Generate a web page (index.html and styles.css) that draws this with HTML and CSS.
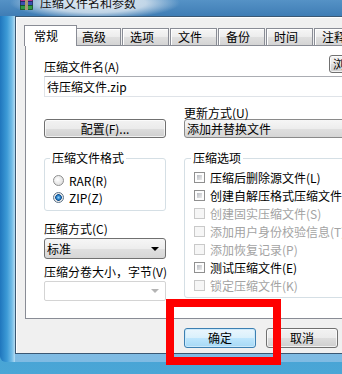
FILE: index.html
```html
<!DOCTYPE html>
<html lang="zh-CN">
<head>
    <meta charset="UTF-8">
    <title>压缩文件名和参数</title>
    <link rel="stylesheet" href="styles.css">
</head>
<body>
    <div class="window">
        <div class="titlebar">
            <svg class="app-icon" viewBox="0 0 13 13" width="13" height="13">
                <rect x="0.5" y="0.5" width="12" height="4" fill="#b6388d" stroke="#5a1a48" stroke-width="0.8"/>
                <rect x="0.5" y="4.5" width="12" height="4" fill="#3b4fb2" stroke="#1b2660" stroke-width="0.8"/>
                <rect x="0.5" y="8.5" width="12" height="4" fill="#2f9a45" stroke="#14501f" stroke-width="0.8"/>
                <rect x="5" y="0" width="3" height="13" fill="#a89a74"/>
            </svg>
            <span class="title">压缩文件名和参数</span>
        </div>

        <div class="client">
            <div class="tabs">
                <div class="tab active">常规</div>
                <div class="tab">高级</div>
                <div class="tab">选项</div>
                <div class="tab">文件</div>
                <div class="tab">备份</div>
                <div class="tab">时间</div>
                <div class="tab">注释</div>
            </div>

            <div class="panel">
                <div class="row-top">
                    <span class="label">压缩文件名(A)</span>
                    <button class="btn browse">浏览(B)...</button>
                </div>
                <div class="textbox">待压缩文件.zip</div>

                <div class="cols cols-mid">
                    <button class="btn config">配置(F)...</button>
                    <div class="field">
                        <div class="label small">更新方式(U)</div>
                        <div class="dropdown">添加并替换文件<span class="arrow"></span></div>
                    </div>
                </div>

                <div class="cols cols-groups">
                    <div class="left-col">
                        <fieldset class="group format">
                            <legend>压缩文件格式</legend>
                            <div class="option"><span class="radio"></span>RAR(R)</div>
                            <div class="option"><span class="radio checked"></span>ZIP(Z)</div>
                        </fieldset>
                        <div class="label method">压缩方式(C)</div>
                        <div class="dropdown tall">标准<span class="arrow"></span></div>
                        <div class="label volume">压缩分卷大小，字节(V)</div>
                        <div class="combo"><span class="arrow"></span></div>
                    </div>

                    <fieldset class="group options">
                        <legend>压缩选项</legend>
                        <div class="check-row"><span class="check"></span>压缩后删除源文件(L)</div>
                        <div class="check-row"><span class="check"></span>创建自解压格式压缩文件(X)</div>
                        <div class="check-row disabled"><span class="check"></span>创建固实压缩文件(S)</div>
                        <div class="check-row disabled"><span class="check"></span>添加用户身份校验信息(T)</div>
                        <div class="check-row disabled"><span class="check"></span>添加恢复记录(P)</div>
                        <div class="check-row"><span class="check"></span>测试压缩文件(E)</div>
                        <div class="check-row disabled"><span class="check"></span>锁定压缩文件(K)</div>
                    </fieldset>
                </div>
            </div>

            <div class="buttons">
                <button class="btn default">确定</button>
                <button class="btn">取消</button>
                <button class="btn">帮助</button>
            </div>
        </div>
    </div>

    <div class="highlight"></div>
</body>
</html>
```

FILE: styles.css
```css
body {
    margin: 0;
    width: 342px;
    height: 374px;
    overflow: hidden;
    position: relative;
    background: linear-gradient(#2c86c2, #4aa6d6);
    font-family: "Noto Sans CJK SC", sans-serif;
    font-size: 12px;
    color: #000;
}

/* window frame */
.window {
    width: 440px;
    height: 362px;
    box-sizing: border-box;
    padding: 0 0 8px 15px;
    display: flex;
    flex-direction: column;
    border-bottom-left-radius: 6px;
    background:
        linear-gradient(90deg, #1f76bd 0, #3c9ad6 7px, #74bde7 12px, #b6dcf2 15px) left top / 15px 100% no-repeat,
        linear-gradient(#9ccdec, #7fbbe3);
}
.titlebar {
    height: 16px;
    margin-left: -15px;
    padding-left: 20px;
    display: flex;
    align-items: flex-start;
    gap: 7px;
    overflow: hidden;
    background:
        radial-gradient(ellipse 85px 16px at 95px 3px, rgba(232, 239, 245, 0.97), rgba(222, 232, 241, 0.8) 60%, rgba(222, 232, 241, 0) 100%),
        linear-gradient(#5592c6, #3f7db5);
}
.app-icon {
    flex: none;
    margin-top: -3px;
}
.title {
    line-height: 14px;
    margin-top: -4px;
    color: #111;
}

/* dialog body */
.client {
    flex: 1;
    display: flex;
    flex-direction: column;
    border: 1px solid #3b5873;
    border-right: none;
    background: #f0f0f0;
    box-shadow: inset 1px 1px 0 #fff;
    padding: 8px 0 0 9px;
}

.tabs {
    display: flex;
    align-items: flex-end;
    height: 20px;
}
.tab {
    flex: none;
    width: 47px;
    height: 17px;
    box-sizing: border-box;
    margin-right: 1px;
    padding-left: 7px;
    border: 1px solid #898c95;
    border-bottom: none;
    line-height: 15px;
    background: linear-gradient(#f6f6f6, #ececec 50%, #dfdfdf 51%, #d4d4d4);
    box-shadow: inset 1px 1px 0 #fff;
}
.tab.active {
    width: 53px;
    height: 21px;
    margin-left: -1px;
    margin-right: -3px;
    margin-bottom: -1px;
    padding-left: 9px;
    line-height: 19px;
    background: #fff;
    box-shadow: none;
    position: relative;
    z-index: 1;
}

.panel {
    width: 395px;
    height: 274px;
    box-sizing: border-box;
    border: 1px solid #898c95;
    background: #fff;
    padding: 9px 15px 0 18px;
}

.label {
    line-height: 14px;
    white-space: nowrap;
}
.label.small {
    line-height: 13px;
}

.row-top {
    display: flex;
    justify-content: space-between;
    align-items: flex-end;
    height: 18px;
}
.row-top .label {
    margin-bottom: -1px;
}

.textbox {
    margin-top: 3px;
    height: 21px;
    box-sizing: border-box;
    border: 1px solid #dfe3e8;
    border-top-color: #abadb3;
    padding-left: 2px;
    line-height: 19px;
}

.cols {
    display: grid;
    grid-template-columns: 122px 1fr;
    column-gap: 18px;
}
.cols-mid {
    margin-top: 9px;
    align-items: end;
}
.cols-groups {
    margin-top: 13px;
    align-items: start;
}

/* buttons */
.btn {
    font: inherit;
    color: #000;
    margin: 0;
    padding: 0;
    box-sizing: border-box;
    border: 1px solid #707070;
    border-radius: 3px;
    background: linear-gradient(#f2f2f2, #ebebeb 50%, #dddddd 51%, #cfcfcf);
    box-shadow: inset 0 0 0 1px rgba(255, 255, 255, 0.7);
    line-height: 16px;
}
.browse {
    width: 75px;
    height: 18px;
    text-align: left;
    padding-left: 3px;
}
.config {
    height: 19px;
}
.btn.default {
    border-color: #3c7fb1;
    background: linear-gradient(#eaf6fd, #d9f0fc 50%, #bee6fd 51%, #a7d9f5);
    box-shadow: inset 0 0 0 1px #cbe9fb;
}

/* dropdowns */
.dropdown {
    height: 19px;
    box-sizing: border-box;
    display: flex;
    align-items: center;
    justify-content: space-between;
    padding: 0 6px 0 2px;
    border: 1px solid #8a8a8a;
    border-radius: 3px;
    background: linear-gradient(#f6f6f6, #ededed 50%, #e0e0e0 51%, #d6d6d6);
    white-space: nowrap;
}
.dropdown.tall {
    height: 21px;
    margin-top: 2px;
    border-color: #707070;
}
.arrow {
    width: 0;
    height: 0;
    border-left: 4px solid transparent;
    border-right: 4px solid transparent;
    border-top: 4px solid #000;
}
.combo {
    margin-top: 2px;
    height: 20px;
    box-sizing: border-box;
    display: flex;
    align-items: center;
    justify-content: flex-end;
    padding-right: 6px;
    border: 1px solid #d4d4d4;
    border-radius: 2px;
    background: #fff;
}
.combo .arrow {
    border-top-color: #b4b4b4;
}

.left-col {
    display: flex;
    flex-direction: column;
}
.label.method {
    margin-top: 11px;
}
.label.volume {
    margin-top: 6px;
}

/* group boxes */
.group {
    margin: 0;
    min-width: 0;
    border: 1px solid #d5dfe5;
    border-radius: 3px;
}
.group legend {
    padding: 0 2px;
    margin-left: -3px;
    line-height: 14px;
}
.format {
    padding: 7px 8px 4px;
}
.options {
    padding: 3px 0 3px 9px;
}

.option,
.check-row {
    display: flex;
    align-items: center;
    gap: 5px;
    white-space: nowrap;
}
.option {
    height: 17px;
}
.check-row {
    height: 18px;
}
.check-row.disabled {
    color: #a3a3a3;
}

.radio {
    flex: none;
    width: 11px;
    height: 11px;
    box-sizing: border-box;
    border-radius: 50%;
    border: 1px solid #8e8f8f;
    background: radial-gradient(circle at 40% 40%, #fff, #d4d4d4);
}
.radio.checked {
    border-color: #5e7387;
    background: radial-gradient(circle, #8fd2fb 0, #2a7ec6 2px, #114f8c 3px, #e4e4e4 3.6px, #fafafa 5px);
}

.check {
    flex: none;
    width: 11px;
    height: 11px;
    box-sizing: border-box;
    border: 1px solid #8f8f8f;
    padding: 2px;
    background: linear-gradient(135deg, #b9bcc2, #ececec) content-box, #fdfdfd;
}
.disabled .check {
    border-color: #c9c9c9;
    background: #f6f6f6;
}

.buttons {
    width: 395px;
    margin-top: 9px;
    display: flex;
    justify-content: flex-end;
    gap: 10px;
}
.buttons .btn {
    width: 72px;
    height: 20px;
}

/* red marker drawn over the OK button */
.highlight {
    position: absolute;
    left: 166px;
    top: 299px;
    width: 115px;
    height: 66px;
    box-sizing: border-box;
    border: 8px solid #f00;
}
```
